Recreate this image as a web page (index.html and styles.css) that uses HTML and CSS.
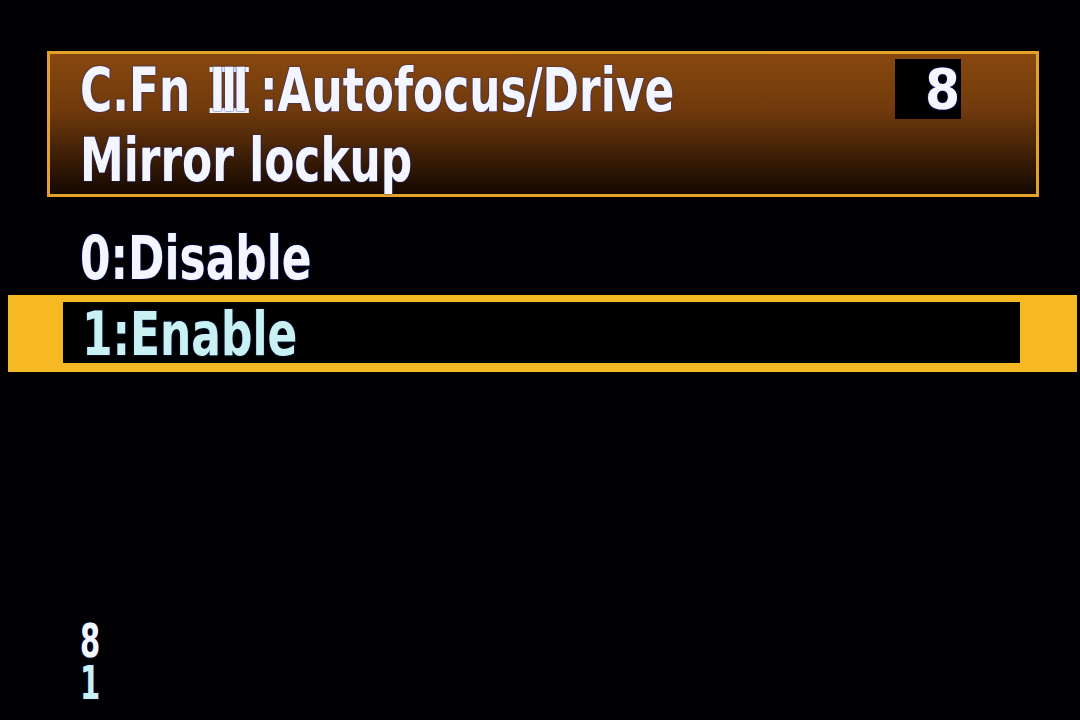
FILE: index.html
```html
<!DOCTYPE html>
<html>
<head>
  <meta charset="UTF-8">
  <title>C.Fn III: Autofocus/Drive</title>
  <link rel="stylesheet" href="styles.css">
</head>
<body>
  <div class="screen">
    <!-- Title box -->
    <div class="header">
      <div class="header-row">
        <span class="squeeze">C.Fn<span class="roman">III</span>:Autofocus/Drive</span>
        <span class="fn-number">8</span>
      </div>
      <div class="subtitle"><span class="squeeze">Mirror lockup</span></div>
    </div>

    <!-- Options -->
    <div class="options">
      <div class="option"><span class="squeeze">0:Disable</span></div>
      <div class="option-selected">
        <div class="option-inner"><span class="squeeze">1:Enable</span></div>
      </div>
    </div>

    <!-- Current settings: fn number / value -->
    <div class="footer"><div class="footer-nums">8
1</div></div>
  </div>
</body>
</html>
```

FILE: styles.css
```css
body {
  margin: 0;
  background-color: #010104;
  font-family: "DejaVu Sans Condensed", "DejaVu Sans", sans-serif;
  font-weight: bold;
  color: #f4f6ff;
}

.screen {
  display: flex;
  flex-direction: column;
  height: 720px;
}

/* the camera font is narrow */
.squeeze {
  display: inline-block;
  transform: scaleX(0.8);
  transform-origin: left center;
  white-space: nowrap;
}

/* Title box */
.header {
  margin: 51px 41px 0 47px;
  height: 146px;
  box-sizing: border-box;
  border: 3px solid #e3a12c;
  background: linear-gradient(to bottom, #88480f 0%, #703a0c 40%, #3a1c05 75%, #140800 100%);
  padding: 1px 0 0 30px;
  text-shadow: 0 0 2px #1d2a9a, 0 0 1px #1d2a9a;
}
.header-row {
  display: flex;
  justify-content: space-between;
  align-items: flex-start;
  padding-right: 75px;
  font-size: 61px;
  line-height: 70px;
}
/* roman numeral III: tight bars with rules top and bottom */
.roman {
  display: inline-block;
  line-height: 36px;
  letter-spacing: -6px;
  padding-right: 6px;
  border-top: 5px solid #f4f6ff;
  border-bottom: 5px solid #f4f6ff;
  margin: 0 14px 0 24px;
}
.fn-number {
  background-color: #000;
  width: 66px;
  height: 60px;
  margin-top: 4px;
  box-sizing: border-box;
  text-align: right;
  padding-right: 1px;
  font-size: 56px;
  line-height: 60px;
}
.subtitle {
  font-size: 61px;
  line-height: 70px;
}

/* Options */
.options {
  margin-top: 26px;
  font-size: 61px;
}
.option {
  padding-left: 80px;
  line-height: 70px;
  height: 72px;
  text-shadow: 0 0 2px #1d2a9a, 0 0 1px #1d2a9a;
}
.option-selected {
  margin: 0 3px 0 8px;
  background-color: #f6b823;
  padding: 7px 57px 9px 55px;
}
.option-inner {
  background-color: #000;
  height: 61px;
  box-sizing: border-box;
  padding: 3px 0 0 19px;
  line-height: 58px;
  color: #c9f1f3;
  text-shadow: 0 0 2px #1a3c8a;
}

/* Footer */
.footer {
  margin-top: auto;
  padding: 0 0 16px 80px;
}
.footer-nums {
  display: inline-block;
  white-space: pre-line;
  font-size: 46px;
  line-height: 42px;
  color: #c9f1f3;
  text-shadow: 0 0 2px #1d2a9a;
  transform: scaleX(0.7);
  transform-origin: left center;
}
.footer-nums::first-line {
  color: #f4f6ff;
}
```
